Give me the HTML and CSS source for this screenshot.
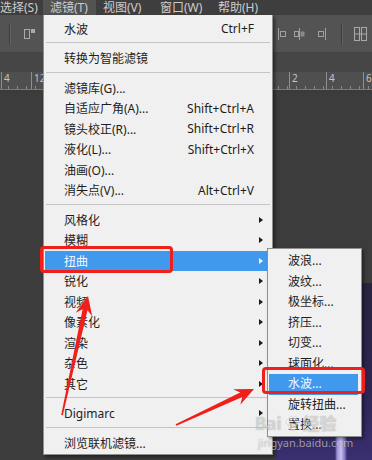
FILE: index.html
```html
<!DOCTYPE html>
<html lang="zh-CN">
<head>
  <meta charset="UTF-8">
  <meta name="viewport" content="width=device-width, initial-scale=1.0">
  <title>滤镜 - 扭曲 - 水波</title>
  <link rel="stylesheet" href="styles.css">
</head>
<body>
  <div class="app">
    <!-- 菜单栏 -->
    <div class="menubar">
      <span class="mb-item mb-first">选择(S)</span>
      <span class="mb-item mb-open">滤镜(T)</span>
      <span class="mb-item mb-view">视图(V)</span>
      <span class="mb-item mb-win">窗口(W)</span>
      <span class="mb-item">帮助(H)</span>
    </div>

    <!-- 选项栏 -->
    <div class="toolbar">
      <span class="tb-sep tb-sep-left"></span>
      <svg class="tb-icon tb-left" width="13" height="12" viewBox="0 0 13 12">
        <rect x="1.5" y="1.5" width="5" height="9" fill="none" stroke="#a9a9a9"/>
        <rect x="8" y="1" width="4" height="4" fill="#a9a9a9"/>
      </svg>
      <div class="tb-right">
        <svg class="tb-icon" width="11" height="14" viewBox="0 0 11 14">
          <line x1="2.5" y1="1" x2="2.5" y2="13" stroke="#a0a0a0"/>
          <rect x="4.5" y="4.5" width="5" height="5" fill="none" stroke="#a0a0a0"/>
        </svg>
        <svg class="tb-icon tb-i2" width="13" height="14" viewBox="0 0 13 14">
          <line x1="6.5" y1="1" x2="6.5" y2="13" stroke="#a0a0a0"/>
          <rect x="1.5" y="4.5" width="4" height="5" fill="none" stroke="#a0a0a0"/>
          <rect x="7.5" y="4.5" width="4" height="5" fill="#8a8a8a"/>
        </svg>
        <svg class="tb-icon tb-i3" width="12" height="14" viewBox="0 0 12 14">
          <line x1="9.5" y1="1" x2="9.5" y2="13" stroke="#a0a0a0"/>
          <rect x="2.5" y="4.5" width="5" height="5" fill="none" stroke="#a0a0a0"/>
        </svg>
        <span class="tb-sep tb-sep-right"></span>
        <svg class="tb-icon tb-i4" width="15" height="16" viewBox="0 0 15 16">
          <rect x="1.5" y="1.5" width="5" height="13" fill="none" stroke="#a9a9a9"/>
          <rect x="8.5" y="1.5" width="5" height="13" fill="none" stroke="#a9a9a9"/>
          <line x1="1" y1="8" x2="14" y2="8" stroke="#a9a9a9"/>
        </svg>
      </div>
    </div>

    <div class="tabbar"></div>

    <!-- 标尺 -->
    <div class="ruler">
      <span class="r-mark r-a">4</span>
      <span class="r-mark r-b">12</span>
      <span class="r-mark r-c">2</span>
      <span class="r-mark r-d">4</span>
      <span class="r-mark r-e">6</span>
    </div>

    <div class="workspace">
      <div class="photo"></div>
    </div>
  </div>

  <!-- 滤镜菜单 -->
  <div class="menu">
    <div class="item"><span class="label">水波</span><span class="key">Ctrl+F</span></div>
    <div class="sep"></div>
    <div class="item"><span class="label">转换为智能滤镜</span></div>
    <div class="sep"></div>
    <div class="item"><span class="label">滤镜库(G)...</span></div>
    <div class="item"><span class="label">自适应广角(A)...</span><span class="key">Shift+Ctrl+A</span></div>
    <div class="item"><span class="label">镜头校正(R)...</span><span class="key">Shift+Ctrl+R</span></div>
    <div class="item"><span class="label">液化(L)...</span><span class="key">Shift+Ctrl+X</span></div>
    <div class="item"><span class="label">油画(O)...</span></div>
    <div class="item"><span class="label">消失点(V)...</span><span class="key">Alt+Ctrl+V</span></div>
    <div class="sep"></div>
    <div class="item sub"><span class="label">风格化</span><span class="arrow"></span></div>
    <div class="item sub"><span class="label">模糊</span><span class="arrow"></span></div>
    <div class="item sub is-hover"><span class="label">扭曲</span><span class="arrow"></span></div>
    <div class="item sub"><span class="label">锐化</span><span class="arrow"></span></div>
    <div class="item sub"><span class="label">视频</span><span class="arrow"></span></div>
    <div class="item sub"><span class="label">像素化</span><span class="arrow"></span></div>
    <div class="item sub"><span class="label">渲染</span><span class="arrow"></span></div>
    <div class="item sub"><span class="label">杂色</span><span class="arrow"></span></div>
    <div class="item sub"><span class="label">其它</span><span class="arrow"></span></div>
    <div class="sep"></div>
    <div class="item sub"><span class="label">Digimarc</span><span class="arrow"></span></div>
    <div class="sep"></div>
    <div class="item"><span class="label">浏览联机滤镜...</span></div>
  </div>

  <!-- 扭曲 子菜单 -->
  <div class="submenu">
    <div class="item">波浪...</div>
    <div class="item">波纹...</div>
    <div class="item">极坐标...</div>
    <div class="item">挤压...</div>
    <div class="item">切变...</div>
    <div class="item">球面化...</div>
    <div class="item is-hover">水波...</div>
    <div class="item">旋转扭曲...</div>
    <div class="item">置换...</div>
  </div>

  <!-- 标注 -->
  <div class="mark mark-1"></div>
  <div class="mark mark-2"></div>
  <svg class="arrows" width="372" height="460" viewBox="0 0 372 460">
    <polygon fill="#ef1f1c" points="61.2,415 82.6,309.2 75.6,312.8 88,296 92.3,316.4 87.5,310.2 62.8,415.3"/>
    <polygon fill="#ef1f1c" points="175.6,424.2 240.2,392.6 233.2,389.2 254,389 240.3,404.7 242.3,397.1 176.4,425.8"/>
  </svg>

  <div class="watermark">
    <div class="wm-logo">
      <span>Bai</span>
      <svg width="15" height="16" viewBox="0 0 15 16">
        <ellipse cx="3" cy="6" rx="1.8" ry="2.3"/>
        <ellipse cx="6" cy="2.8" rx="1.8" ry="2.3"/>
        <ellipse cx="10" cy="2.8" rx="1.8" ry="2.3"/>
        <ellipse cx="12.5" cy="6.5" rx="1.8" ry="2.3"/>
        <path d="M7.5 7 C4 7 3 12 4.5 13.5 C6 15 9 15 10.5 13.5 C12 12 11 7 7.5 7 Z"/>
      </svg>
      <span>经验</span>
    </div>
    <div class="wm-url">jingyan.baidu.com</div>
  </div>
</body>
</html>
```

FILE: styles.css
```css
/* 基本 */
body {
  margin: 0;
  width: 372px;
  height: 460px;
  overflow: hidden;
  position: relative;
  background: #3c3c3c;
  font-family: "Noto Sans", "Noto Sans CJK SC", sans-serif;
}

.app {
  display: flex;
  flex-direction: column;
  height: 460px;
}

/* 菜单栏 */
.menubar {
  height: 15px;
  display: flex;
  background: #3e3e3e;
  color: #cdcdcd;
  font-size: 12px;
  line-height: 15px;
  white-space: nowrap;
}
.mb-item {
  padding-left: 7px;
}
.mb-first {
  width: 43px;
  padding-left: 0;
  box-sizing: border-box;
}
.mb-open {
  width: 53px;
  box-sizing: border-box;
  background: #535353;
}
.mb-view {
  width: 57px;
  box-sizing: border-box;
}
.mb-win {
  width: 58px;
  box-sizing: border-box;
}

/* 选项栏 */
.toolbar {
  height: 38px;
  display: flex;
  align-items: center;
  background: #535353;
  border-bottom: 1px solid #424242;
  box-sizing: border-box;
}
.tb-sep {
  width: 1px;
  height: 22px;
  background: #3f3f3f;
  border-right: 1px solid #626262;
}
.tb-sep-left {
  margin-left: 9px;
}
.tb-left {
  margin-left: 12px;
}
.tb-icon {
  display: block;
}
.tb-right {
  margin-left: auto;
  margin-right: 4px;
  display: flex;
  align-items: center;
}
.tb-i2 {
  margin-left: 6px;
}
.tb-i3 {
  margin-left: 10px;
}
.tb-sep-right {
  margin-left: 13px;
}
.tb-i4 {
  margin-left: 10px;
}

.tabbar {
  height: 19px;
  background: #464646;
}

/* 标尺 */
.ruler {
  height: 18px;
  position: relative;
  background:
    repeating-linear-gradient(to right, transparent 0 8px, #8a8a8a 8px 9px) left bottom / 100% 3px no-repeat,
    #4f4f4f;
  border-bottom: 1px solid #7a7a7a;
  box-sizing: border-box;
  color: #c4c4c4;
  font-size: 10px;
  line-height: 12px;
}
.r-mark {
  position: absolute;
  top: 0;
  height: 17px;
  padding-left: 2px;
  border-left: 1px solid #8e8e8e;
}
.r-a { left: 1px; }
.r-b { left: 31px; }
.r-c { left: 289px; }
.r-d { left: 326px; }
.r-e { left: 363px; }

.workspace {
  flex: 1;
  background: #3c3c3c;
  padding: 193px 0 0 275px;
  display: flex;
}
.photo {
  flex: 1;
  background:
    linear-gradient(to right, transparent 0 60px, #9a8fd6 62px, #c8c0f0 66px, #7d70c0 70px, transparent 72px) left bottom / 100% 24px no-repeat,
    linear-gradient(to bottom, #29243f, #2c2552 60%, #3a2f70);
}

/* 滤镜菜单 */
.menu {
  position: absolute;
  left: 43px;
  top: 15px;
  width: 228px;
  padding: 3.5px 0 1px;
  background: #f0f0f0;
  border: 1px solid #8f8f8f;
  border-top: 0;
  box-shadow: 2px 2px 3px rgba(0, 0, 0, 0.45);
  color: #1d1d1d;
  font-size: 12px;
}
.menu .item {
  height: 20.5px;
  margin: 0 1px;
  padding: 0 17px 0 19px;
  display: flex;
  align-items: center;
  white-space: nowrap;
}
.menu .item.sub {
  padding-right: 8px;
}
.label {
  flex: 1;
}
.key {
  color: #1d1d1d;
}
.arrow {
  width: 0;
  height: 0;
  border-left: 4px solid #1a1a1a;
  border-top: 3.5px solid transparent;
  border-bottom: 3.5px solid transparent;
}
.sep {
  height: 1px;
  margin: 3px 2px 5px;
  background: #c4c4c4;
}
.item.is-hover {
  background: #4199ee;
  color: #f4f8ff;
}
.item.is-hover .arrow {
  border-left-color: #f4f8ff;
}

/* 子菜单 */
.submenu {
  position: absolute;
  left: 267px;
  top: 248px;
  width: 93px;
  padding: 2px 0 0.5px;
  background: #f0f0f0;
  border: 1px solid #8f8f8f;
  box-shadow: 2px 2px 3px rgba(0, 0, 0, 0.4);
  color: #1d1d1d;
  font-size: 12px;
}
.submenu .item {
  height: 20.5px;
  line-height: 20.5px;
  margin: 0 3px 0 1px;
  padding-left: 19px;
  white-space: nowrap;
}

/* 红色标注 */
.mark {
  position: absolute;
  box-sizing: border-box;
  border: 3px solid #ef1f1c;
  border-radius: 4px;
}
.mark-1 {
  left: 40px;
  top: 246px;
  width: 133px;
  height: 27px;
}
.mark-2 {
  left: 262px;
  top: 367px;
  width: 103px;
  height: 27px;
}
.arrows {
  position: absolute;
  left: 0;
  top: 0;
  pointer-events: none;
}

/* 水印 */
.watermark {
  position: absolute;
  left: 255px;
  top: 414px;
  color: rgba(255, 255, 255, 0.55);
  text-shadow: 0 0 1px rgba(0, 0, 0, 0.35);
  pointer-events: none;
}
.wm-logo {
  display: flex;
  align-items: center;
  gap: 3px;
  font-size: 17px;
  font-weight: bold;
  line-height: 20px;
}
.wm-logo svg {
  fill: rgba(255, 255, 255, 0.55);
  stroke: rgba(0, 0, 0, 0.2);
  stroke-width: 0.5;
}
.wm-url {
  margin-top: 3px;
  padding-left: 3px;
  font-size: 11px;
  line-height: 12px;
}
```
